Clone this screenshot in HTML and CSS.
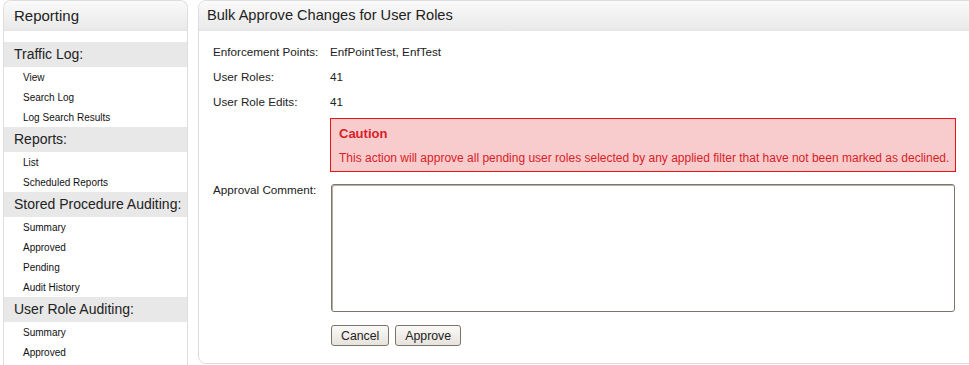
FILE: index.html
```html
<!DOCTYPE html>
<html lang="en">
<head>
  <meta charset="UTF-8">
  <title>Bulk Approve Changes for User Roles</title>
  <link rel="stylesheet" href="styles.css">
</head>
<body>
  <div class="layout">
    <!-- Menu lateral -->
    <div class="panel side">
      <div class="panel-head">Reporting</div>
      <div class="side-body">
        <div class="group">Traffic Log:</div>
        <a class="item" href="#">View</a>
        <a class="item" href="#">Search Log</a>
        <a class="item" href="#">Log Search Results</a>
        <div class="group">Reports:</div>
        <a class="item" href="#">List</a>
        <a class="item" href="#">Scheduled Reports</a>
        <div class="group">Stored Procedure Auditing:</div>
        <a class="item" href="#">Summary</a>
        <a class="item" href="#">Approved</a>
        <a class="item" href="#">Pending</a>
        <a class="item" href="#">Audit History</a>
        <div class="group">User Role Auditing:</div>
        <a class="item" href="#">Summary</a>
        <a class="item" href="#">Approved</a>
      </div>
    </div>

    <!-- Contenido principal -->
    <div class="panel main">
      <div class="panel-head main-head">Bulk Approve Changes for User Roles</div>
      <div class="main-body">
        <div class="row"><span class="label">Enforcement Points:</span><span>EnfPointTest, EnfTest</span></div>
        <div class="row"><span class="label">User Roles:</span><span>41</span></div>
        <div class="row"><span class="label">User Role Edits:</span><span>41</span></div>
        <div class="caution">
          <div class="caution-title">Caution</div>
          <div class="caution-text">This action will approve all pending user roles selected by any applied filter that have not been marked as declined.</div>
        </div>
        <div class="comment-row">
          <span class="label">Approval Comment:</span>
          <textarea class="comment"></textarea>
        </div>
        <div class="actions">
          <button class="btn">Cancel</button>
          <button class="btn">Approve</button>
        </div>
      </div>
    </div>
  </div>
</body>
</html>
```

FILE: styles.css
```css
/* Estilos básicos */
body {
  margin: 0;
  font-family: "Liberation Sans", Arial, sans-serif;
  color: #222;
  background: #fff;
  overflow: hidden;
}
.layout {
  display: flex;
  align-items: flex-start;
  gap: 10px;
  padding-left: 3px;
  margin-right: -20px;
  height: 365px;
  overflow: hidden;
}
.panel {
  border: 1px solid #ddd;
  border-radius: 8px;
  background: #fff;
}
.panel-head {
  height: 29px;
  line-height: 29px;
  font-size: 15px;
  padding-left: 10px;
  color: #222;
  border-bottom: 1px solid #e4e4e4;
  border-radius: 8px 8px 0 0;
  background: linear-gradient(#fafafa, #e9e9e9);
}
.side {
  width: 183px;
  flex: none;
  border-bottom: none;
  border-radius: 8px 8px 0 0;
  height: 400px;
}
.side-body {
  padding-top: 11px;
}
.group {
  height: 25px;
  line-height: 25px;
  font-size: 14px;
  padding-left: 10px;
  white-space: nowrap;
  background: #e8e8e8;
}
.item {
  display: block;
  height: 20px;
  line-height: 22px;
  font-size: 10px;
  padding-left: 19px;
  color: #111;
  text-decoration: none;
}
.main {
  flex: 1;
  height: 362px;
}
.main-head {
  padding-left: 8px;
  font-size: 14.6px;
}
.main-body {
  padding: 8px 14px 0;
  font-size: 11.7px;
}
.row {
  display: flex;
  height: 25px;
  line-height: 25px;
}
.label {
  width: 117px;
  flex: none;
}
.caution {
  margin: 4px 0 0 117px;
  width: 608px;
  padding: 6px 8px 4px;
  border: 1px solid #e8141c;
  background: #f8cbcd;
  color: #d81e26;
  font-size: 12px;
}
.caution-title {
  font-weight: bold;
  font-size: 13px;
  line-height: 18px;
}
.caution-text {
  margin-top: 6px;
  line-height: 18px;
  white-space: nowrap;
}
.comment-row {
  display: flex;
  margin-top: 12px;
}
.comment-row .label {
  line-height: 11px;
}
.comment {
  display: block;
  box-sizing: border-box;
  width: 624px;
  height: 128px;
  margin: 0 0 0 1px;
  border: 1px solid #7d756c;
  border-radius: 3px;
  box-shadow: inset 1px 1px 0 #b8b0a6;
  resize: none;
}
.actions {
  display: flex;
  gap: 6px;
  margin: 13px 0 0 118px;
}
.btn {
  box-sizing: border-box;
  height: 21px;
  padding: 0 9px;
  font-family: "Liberation Sans", Arial, sans-serif;
  font-size: 12.3px;
  color: #222;
  border: 1px solid #7d756c;
  border-radius: 3px;
  background: linear-gradient(#fbfaf8, #e6e2dc);
}
```
